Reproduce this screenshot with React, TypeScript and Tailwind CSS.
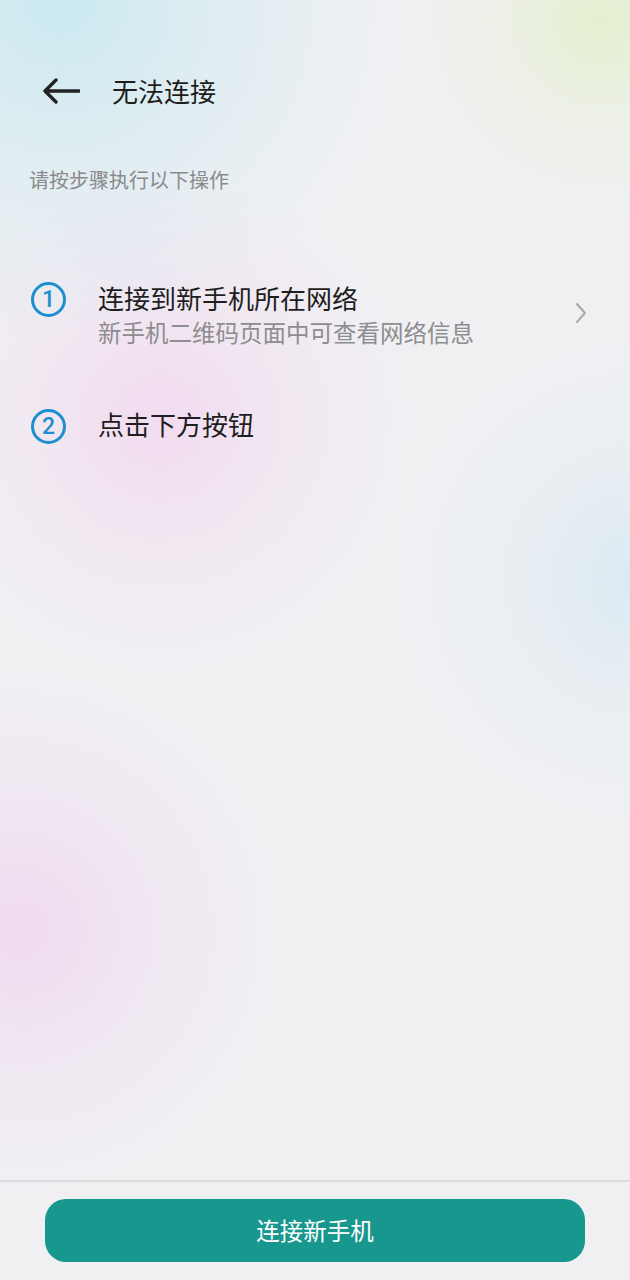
export default function App() {
  const font = { fontFamily: '"Noto Sans CJK SC", "Noto Sans", sans-serif' };
  const digit = { fontFamily: 'Roboto, "Noto Sans", sans-serif' };

  return (
    <div
      className="relative w-[630px] h-[1280px] overflow-hidden bg-[#f0f0f3] flex flex-col"
      style={font}
    >
      {/* soft colour blobs */}
      <div className="absolute inset-0 bg-[radial-gradient(circle_at_60px_0px,rgba(195,232,240,0.85)_0px,rgba(205,234,240,0.45)_160px,rgba(240,240,243,0)_340px),radial-gradient(circle_at_600px_20px,rgba(228,240,205,0.95)_0px,rgba(232,240,215,0.5)_90px,rgba(240,240,243,0)_200px),radial-gradient(circle_at_160px_420px,rgba(242,218,240,0.95)_0px,rgba(242,224,240,0.55)_120px,rgba(240,240,243,0)_250px),radial-gradient(circle_at_20px_930px,rgba(240,218,240,1)_0px,rgba(240,224,240,0.6)_120px,rgba(240,240,243,0)_260px),radial-gradient(circle_at_640px_580px,rgba(218,234,242,1)_0px,rgba(224,236,242,0.5)_110px,rgba(240,240,243,0)_240px)]" />

      <div className="relative flex flex-col flex-1">
        {/* header */}
        <div className="mt-[62px] h-[58px] flex items-center pl-[42px]">
          <svg width="38" height="28" viewBox="0 0 38 28" fill="none">
            <path
              d="M37 14H3M14 3L3 14l11 11"
              stroke="#222"
              strokeWidth="3.4"
              strokeLinecap="round"
              strokeLinejoin="round"
            />
          </svg>
          <span className="ml-[32px] text-[26px] leading-[32px] text-[#1e1e1e]">无法连接</span>
        </div>

        <p className="mt-[46px] pl-[29px] text-[20px] leading-[28px] text-[#8a8a8d]">
          请按步骤执行以下操作
        </p>

        {/* step 1 */}
        <div className="mt-[87px] flex items-start pl-[31px] pr-[42px]">
          <div
            className="mt-[1px] w-[35px] h-[35px] rounded-full border-[3px] border-[#1d8fd0] flex items-center justify-center text-[23px] leading-none text-[#1d8fd0] font-medium"
            style={digit}
          >
            1
          </div>
          <div className="ml-[32px] flex-1 flex flex-col">
            <span className="text-[26px] leading-[34px] text-[#1e1e1e]">连接到新手机所在网络</span>
            <span className="mt-[2px] text-[23.5px] leading-[30px] text-[#8d8d90]">
              新手机二维码页面中可查看网络信息
            </span>
          </div>
          <svg className="mt-[21px]" width="14" height="22" viewBox="0 0 14 22" fill="none">
            <path
              d="M3 2l8 9-8 9"
              stroke="#a8a8ab"
              strokeWidth="2"
              strokeLinecap="round"
              strokeLinejoin="round"
            />
          </svg>
        </div>

        {/* step 2 */}
        <div className="mt-[60px] flex items-start pl-[31px]">
          <div
            className="mt-[2px] w-[35px] h-[35px] rounded-full border-[3px] border-[#1d8fd0] flex items-center justify-center text-[23px] leading-none text-[#1d8fd0] font-medium"
            style={digit}
          >
            2
          </div>
          <span className="ml-[32px] text-[26px] leading-[34px] text-[#1e1e1e]">点击下方按钮</span>
        </div>

        <div className="flex-1" />

        {/* bottom bar */}
        <div className="border-t-2 border-[#dcdcdf] pt-[17px] pb-[18px] px-[45px]">
          <button className="w-full h-[63px] rounded-[21px] bg-[#18978e] text-white text-[23.5px] leading-none">
            连接新手机
          </button>
        </div>
      </div>
    </div>
  );
}
